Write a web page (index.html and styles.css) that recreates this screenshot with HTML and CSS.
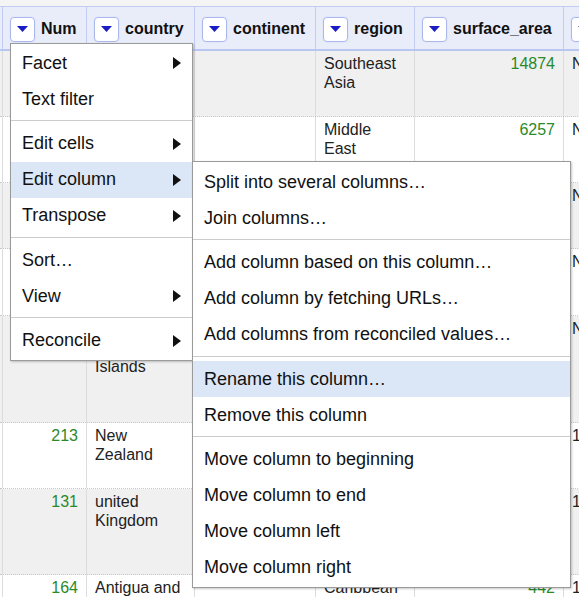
FILE: index.html
```html
<!DOCTYPE html>
<html>
<head>
<meta charset="utf-8">
<link rel="stylesheet" href="styles.css">
</head>
<body>
<div class="grid">
  <div class="hrow">
    <div class="hc c0"></div>
    <div class="hc cnum"><span class="dd"><svg width="11" height="6" viewBox="0 0 11 6"><polygon points="0,0 11,0 5.5,6" fill="#1c1cc4"/></svg></span><span>Num</span></div>
    <div class="hc ccountry"><span class="dd"><svg width="11" height="6" viewBox="0 0 11 6"><polygon points="0,0 11,0 5.5,6" fill="#1c1cc4"/></svg></span><span>country</span></div>
    <div class="hc ccont"><span class="dd"><svg width="11" height="6" viewBox="0 0 11 6"><polygon points="0,0 11,0 5.5,6" fill="#1c1cc4"/></svg></span><span>continent</span></div>
    <div class="hc cregion"><span class="dd"><svg width="11" height="6" viewBox="0 0 11 6"><polygon points="0,0 11,0 5.5,6" fill="#1c1cc4"/></svg></span><span>region</span></div>
    <div class="hc csurf"><span class="dd"><svg width="11" height="6" viewBox="0 0 11 6"><polygon points="0,0 11,0 5.5,6" fill="#1c1cc4"/></svg></span><span>surface_area</span></div>
    <div class="hc clast"><span class="dd"><svg width="11" height="6" viewBox="0 0 11 6"><polygon points="0,0 11,0 5.5,6" fill="#1c1cc4"/></svg></span><span>independence_year</span></div>
  </div>

  <div class="row odd h66">
    <div class="cell c0"></div>
    <div class="cell cnum num">45</div>
    <div class="cell ccountry">Singapore</div>
    <div class="cell ccont"></div>
    <div class="cell cregion">Southeast Asia</div>
    <div class="cell csurf num">14874</div>
    <div class="cell clast">NULL</div>
  </div>
  <div class="row h66">
    <div class="cell c0"></div>
    <div class="cell cnum num">12</div>
    <div class="cell ccountry">Qatar</div>
    <div class="cell ccont"></div>
    <div class="cell cregion">Middle East</div>
    <div class="cell csurf num">6257</div>
    <div class="cell clast">NULL</div>
  </div>
  <div class="row odd h66">
    <div class="cell c0"></div>
    <div class="cell cnum num">88</div>
    <div class="cell ccountry">Bahrain</div>
    <div class="cell ccont"></div>
    <div class="cell cregion">Middle East</div>
    <div class="cell csurf num">694</div>
    <div class="cell clast">NULL</div>
  </div>
  <div class="row h67">
    <div class="cell c0"></div>
    <div class="cell cnum num">97</div>
    <div class="cell ccountry">Malta</div>
    <div class="cell ccont"></div>
    <div class="cell cregion">Southern Europe</div>
    <div class="cell csurf num">316</div>
    <div class="cell clast">NULL</div>
  </div>
  <div class="row odd h107">
    <div class="cell c0"></div>
    <div class="cell cnum num">219</div>
    <div class="cell ccountry">Turks and Caicos Islands</div>
    <div class="cell ccont"></div>
    <div class="cell cregion">Caribbean</div>
    <div class="cell csurf num">430</div>
    <div class="cell clast">NULL</div>
  </div>
  <div class="row h66">
    <div class="cell c0"></div>
    <div class="cell cnum num">213</div>
    <div class="cell ccountry">New Zealand</div>
    <div class="cell ccont"></div>
    <div class="cell cregion">Australia and New Zealand</div>
    <div class="cell csurf num">270534</div>
    <div class="cell clast">1907</div>
  </div>
  <div class="row odd h86">
    <div class="cell c0"></div>
    <div class="cell cnum num">131</div>
    <div class="cell ccountry">united Kingdom</div>
    <div class="cell ccont"></div>
    <div class="cell cregion">British Islands</div>
    <div class="cell csurf num">242900</div>
    <div class="cell clast">1066</div>
  </div>
  <div class="row h66">
    <div class="cell c0"></div>
    <div class="cell cnum num">164</div>
    <div class="cell ccountry">Antigua and Barbuda</div>
    <div class="cell ccont"></div>
    <div class="cell cregion">Caribbean</div>
    <div class="cell csurf num">442</div>
    <div class="cell clast">1981</div>
  </div>
</div>

<div class="menu main-menu">
  <div class="item">Facet<span class="arrow"></span></div>
  <div class="item">Text filter</div>
  <div class="sep"></div>
  <div class="item">Edit cells<span class="arrow"></span></div>
  <div class="item active">Edit column<span class="arrow"></span></div>
  <div class="item">Transpose<span class="arrow"></span></div>
  <div class="sep"></div>
  <div class="item">Sort…</div>
  <div class="item">View<span class="arrow"></span></div>
  <div class="sep"></div>
  <div class="item">Reconcile<span class="arrow"></span></div>
</div>

<div class="menu sub-menu">
  <div class="item">Split into several columns…</div>
  <div class="item">Join columns…</div>
  <div class="sep"></div>
  <div class="item">Add column based on this column…</div>
  <div class="item">Add column by fetching URLs…</div>
  <div class="item">Add columns from reconciled values…</div>
  <div class="sep"></div>
  <div class="item active">Rename this column…</div>
  <div class="item">Remove this column</div>
  <div class="sep"></div>
  <div class="item">Move column to beginning</div>
  <div class="item">Move column to end</div>
  <div class="item">Move column left</div>
  <div class="item">Move column right</div>
</div>
</body>
</html>
```

FILE: styles.css
```css
html, body {
  margin: 0;
  padding: 0;
}
body {
  width: 579px;
  height: 597px;
  overflow: hidden;
  position: relative;
  background: #f4f4f4;
  font-family: "Liberation Sans", Arial, sans-serif;
  font-size: 16px;
  color: #222;
}
.grid {
  margin-top: 6px;
  width: 800px;
  background: #fff;
}
.hrow {
  display: flex;
  height: 45px;
  box-sizing: border-box;
  border-top: 1px solid #c3cdf3;
  border-bottom: 2px solid #b9c6f2;
  background: #e9ecf9;
}
.hc {
  display: flex;
  align-items: center;
  gap: 6px;
  padding: 2px 0 0 7px;
  box-sizing: border-box;
  flex-shrink: 0;
  border-right: 1px solid #c3cdf3;
  font-weight: bold;
  color: #111;
  white-space: nowrap;
  overflow: hidden;
}
.hc.c0 { padding-left: 0; }
.dd {
  width: 25px;
  height: 25px;
  box-sizing: border-box;
  border: 1px solid #aab8ee;
  border-radius: 4px;
  background: #fff;
  display: flex;
  align-items: center;
  justify-content: center;
  flex-shrink: 0;
  box-shadow: 0 0 0 1px #e2e7fb;
}
.dd svg { display: block; }

.c0 { width: 3px; }
.cnum { width: 84px; }
.ccountry { width: 108px; }
.ccont { width: 121px; }
.cregion { width: 99px; }
.csurf { width: 149px; }
.clast { width: 200px; }

.row {
  display: flex;
  box-sizing: border-box;
  border-bottom: 1px dotted #c8c8c8;
  background: #fff;
}
.row.odd { background: #f0f0f0; }
.h66 { height: 66px; }
.h67 { height: 67px; }
.h86 { height: 86px; }
.h107 { height: 107px; }

.cell {
  box-sizing: border-box;
  flex-shrink: 0;
  padding: 3px 8px 4px;
  line-height: 19px;
  border-right: 1px solid #dcdcdc;
  overflow: hidden;
}
.cell.c0 { padding: 0; }
.cell.num {
  text-align: right;
  color: #2a8a2a;
}

.menu {
  position: absolute;
  background: #fff;
  border: 1px solid #9a9a9a;
  box-shadow: 1px 1px 2px rgba(0, 0, 0, 0.22);
  color: #111;
  font-size: 18px;
  box-sizing: border-box;
}
.main-menu {
  left: 10px;
  top: 43px;
  width: 183px;
  padding: 1px 0 1px;
}
.sub-menu {
  left: 192px;
  top: 161px;
  width: 379px;
  padding: 2px 0 1px;
}
.item {
  height: 36px;
  display: flex;
  align-items: center;
  padding: 0 11px;
  white-space: nowrap;
}
.item.active { background: #dbe6f6; }
.arrow {
  margin-left: auto;
  width: 0;
  height: 0;
  border-left: 8px solid #111;
  border-top: 6.5px solid transparent;
  border-bottom: 6.5px solid transparent;
}
.sep {
  height: 1px;
  background: #cccccc;
  margin: 3px 0 4.5px;
}
```
